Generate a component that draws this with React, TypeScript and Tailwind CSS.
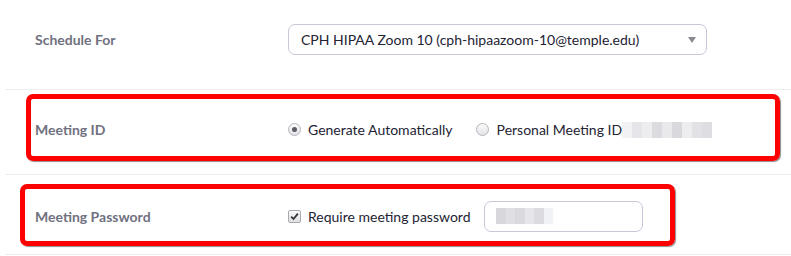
import React from "react";

const font = { fontFamily: "Lato, 'Noto Sans', sans-serif" };

function Radio({ checked }: { checked?: boolean }) {
  return (
    <span className="w-[13px] h-[13px] rounded-full border border-[#b4b4bc] bg-gradient-to-b from-[#fafafa] to-[#e4e4e8] flex items-center justify-center shrink-0">
      {checked && <span className="w-[5px] h-[5px] rounded-full bg-[#5c5c64]" />}
    </span>
  );
}

function Checkbox() {
  return (
    <span className="w-[13px] h-[13px] rounded-[2px] border border-[#a8a8b0] bg-gradient-to-b from-[#fafafa] to-[#e0e0e4] flex items-center justify-center shrink-0">
      <svg width="9" height="9" viewBox="0 0 9 9">
        <path d="M1.2 4.6 L3.5 7 L7.9 1.6" fill="none" stroke="#333" strokeWidth="1.8" />
      </svg>
    </span>
  );
}

function Blur({ shades }: { shades: string[] }) {
  return (
    <span className="flex h-[16px]">
      {shades.map((c, i) => (
        <span key={i} className="w-[10px] h-full" style={{ background: c }} />
      ))}
    </span>
  );
}

export default function App() {
  return (
    <div className="w-[791px] h-[256px] bg-white overflow-hidden" style={font}>
      {/* Schedule For */}
      <div className="flex items-center pt-[24px] pb-[34px] pl-[35px]">
        <div className="w-[253px] text-[14px] font-bold text-[#6f7180]">Schedule For</div>
        <div className="w-[419px] h-[31px] rounded-[7px] border border-[#c9c7d9] flex items-center pl-[12px] pr-[10px] text-[14px] text-[#232333]">
          <span className="flex-1">CPH HIPAA Zoom 10 (cph-hipaazoom-10@temple.edu)</span>
          <svg width="8" height="6" viewBox="0 0 8 6">
            <path d="M0 0 H8 L4 6 Z" fill="#8a8a92" />
          </svg>
        </div>
      </div>
      <div className="ml-[5px] h-px bg-[#ececf1]" />

      {/* Meeting ID */}
      <div className="ml-[26px] mt-[4px] w-[754px] h-[67px] border-[5px] border-[#ff0000] rounded-[7px] shadow-[1px_1px_1px_rgba(0,0,0,0.45)] flex items-center pl-[4px] pt-[4px]">
        <div className="w-[253px] text-[14px] font-bold text-[#6f7180]">Meeting ID</div>
        <div className="flex items-center text-[14px] text-[#232333]">
          <Radio checked />
          <span className="ml-[7px]">Generate Automatically</span>
          <span className="ml-[23px]"><Radio /></span>
          <span className="ml-[8px]">Personal Meeting ID</span>
          <Blur shades={["#f2f2f4", "#e6e6ea", "#ededf0", "#dcdce0", "#e9e9ec", "#d9d9dd", "#ededf0", "#e2e2e6", "#dedee2"]} />
        </div>
      </div>
      <div className="ml-[5px] mt-[13px] h-px bg-[#ececf1]" />

      {/* Meeting Password */}
      <div className="ml-[20px] mt-[9px] w-[655px] h-[62px] border-[5px] border-[#ff0000] rounded-[7px] shadow-[1px_1px_1px_rgba(0,0,0,0.45)] flex items-center pl-[10px] pt-[2px]">
        <div className="w-[253px] text-[14px] font-bold text-[#6f7180]">Meeting Password</div>
        <div className="flex items-center text-[14px] text-[#232333]">
          <Checkbox />
          <span className="ml-[7px]">Require meeting password</span>
          <div className="ml-[14px] w-[159px] h-[31px] rounded-[7px] border border-[#c9c7d9] flex items-center pl-[11px]">
            <span className="flex h-[16px]">
              {["#d8d8dc", "#e0e0e4", "#dadade", "#e6e6ea", "#dcdce0", "#f0f2f6"].map((c, i) => (
                <span key={i} className="w-[9.5px] h-full" style={{ background: c }} />
              ))}
            </span>
          </div>
        </div>
      </div>
      <div className="ml-[5px] mt-[8px] h-px bg-[#ececf1]" />
    </div>
  );
}
